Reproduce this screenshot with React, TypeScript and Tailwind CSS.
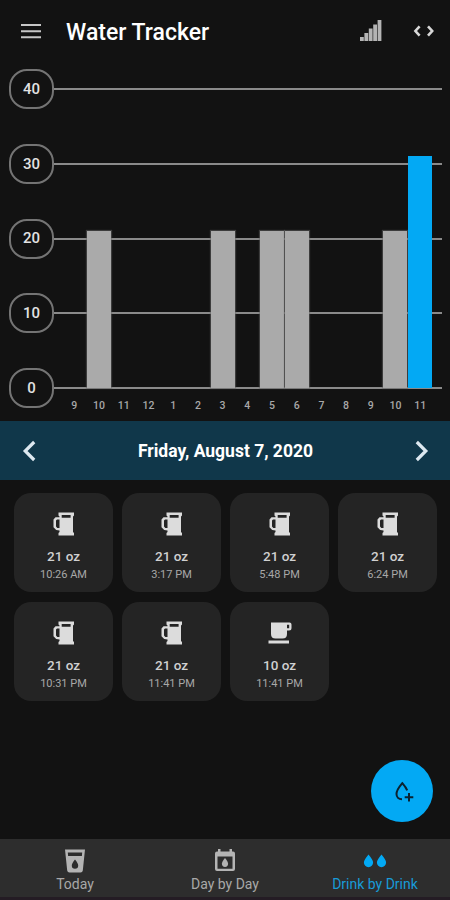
import React from 'react';

interface Drink {
  amount: number;
  time: string;
  kind: 'mug' | 'cup';
}

interface HourTotal {
  hour: string;
  ounces: number;
  active?: boolean;
}

const PIXELS_PER_OUNCE = 7.475;

const ticks = [40, 30, 20, 10, 0];

const hours: HourTotal[] = [
  { hour: '9', ounces: 0 },
  { hour: '10', ounces: 21 },
  { hour: '11', ounces: 0 },
  { hour: '12', ounces: 0 },
  { hour: '1', ounces: 0 },
  { hour: '2', ounces: 0 },
  { hour: '3', ounces: 21 },
  { hour: '4', ounces: 0 },
  { hour: '5', ounces: 21 },
  { hour: '6', ounces: 21 },
  { hour: '7', ounces: 0 },
  { hour: '8', ounces: 0 },
  { hour: '9', ounces: 0 },
  { hour: '10', ounces: 21 },
  { hour: '11', ounces: 31, active: true },
];

const drinks: Drink[] = [
  { amount: 21, time: '10:26 AM', kind: 'mug' },
  { amount: 21, time: '3:17 PM', kind: 'mug' },
  { amount: 21, time: '5:48 PM', kind: 'mug' },
  { amount: 21, time: '6:24 PM', kind: 'mug' },
  { amount: 21, time: '10:31 PM', kind: 'mug' },
  { amount: 21, time: '11:41 PM', kind: 'mug' },
  { amount: 10, time: '11:41 PM', kind: 'cup' },
];

const MugIcon = () => (
  <svg width="22" height="24" viewBox="0 0 22 24" fill="#dcdcdc">
    <path
      fillRule="evenodd"
      d="M5.5 0.5H21V3.5L20 4.5V20L21 21V23.5H5.5V21L6.5 20V18.5L3.2 18L0.5 15.2V7.5L2.5 5.3H6.5V4.5L5.5 3.5ZM8.7 3V5.8H17.6V3ZM6.5 7.5H4L3 8.5V14.5L4.3 16H6.5Z"
    />
  </svg>
);

const CupIcon = () => (
  <svg width="24" height="24" viewBox="0 0 24 24" fill="#dcdcdc">
    <path
      fillRule="evenodd"
      d="M3 1.5H21.5Q23.5 1.5 23.5 3.5V7Q23.5 9.5 21 9.5H19V13Q19 17.5 14.5 17.5H7.5Q3 17.5 3 13ZM19 3.8V7.3H21.2V3.8Z"
    />
    <path d="M0.5 19.5H21V22.5H0.5Z" />
  </svg>
);

const Header = () => (
  <header className="flex h-[69px] items-start pl-[21px] pr-[15px] pt-[19px]">
    <svg width="20" height="24" viewBox="0 0 20 24" fill="#c6c6c6">
      <path d="M0 5H20V7H0ZM0 11.2H20V13.2H0ZM0 17.2H20V19.2H0Z" />
    </svg>
    <h1 className="ml-[25px] text-[23px] font-medium leading-7 text-white">Water Tracker</h1>
    <svg className="ml-auto" width="22" height="24" viewBox="0 0 22 24" fill="#b4b4b4">
      <path d="M0 18H3.8V22H0ZM4.4 14H8.2V22H4.4ZM8.8 9.5H12.6V22H8.8ZM13.2 5.5H17V22H13.2ZM17.6 1H21.4V22H17.6Z" />
    </svg>
    <svg className="ml-[31px]" width="22" height="24" viewBox="0 0 22 24" fill="none" stroke="#d8d8d8" strokeWidth="2.6">
      <path d="M6.6 7.3L2.4 12L6.6 16.7M15 7.3L19.2 12L15 16.7" />
    </svg>
  </header>
);

const Chart = () => (
  <section className="grid h-[352px] pl-[9px] pr-2">
    <div className="col-start-1 row-start-1 flex h-[339px] flex-col justify-between">
      {ticks.map((tick) => (
        <div key={tick} className="flex h-10 items-center">
          <div className="flex h-10 w-[45px] items-center justify-center rounded-[18px] border-2 border-[#747474] text-[15px] font-medium text-[#e2e2e2]">
            {tick}
          </div>
          <div className="h-[2px] flex-1 bg-[#8a8a8a]" />
        </div>
      ))}
    </div>
    <div className="z-10 col-start-1 row-start-1 ml-[53px] mr-[9.5px] flex items-end">
      {hours.map(({ hour, ounces, active }, index) => (
        <div key={index} className="flex flex-1 flex-col">
          {ounces > 0 && (
            <div
              className={`mx-auto w-6 ${active ? 'bg-[#03a9f4]' : 'bg-[#aaaaaa] shadow-[0_0_1px_1px_#66666680]'}`}
              style={{ height: ounces * PIXELS_PER_OUNCE }}
            />
          )}
          <div className="h-[33px] pt-[10px] text-center text-[10.5px] font-medium leading-4 text-[#a8a8a8]">
            {hour}
          </div>
        </div>
      ))}
    </div>
  </section>
);

const DateBar = () => (
  <div className="flex h-[59px] items-center justify-between bg-[#10374a] pl-[21px] pr-5 pt-px">
    <svg width="16" height="22" viewBox="0 0 16 22" fill="none" stroke="#dde8f0" strokeWidth="3.2">
      <path d="M13.2 2L4.2 11L13.2 20" />
    </svg>
    <h2 className="text-[17.5px] font-bold text-white">Friday, August 7, 2020</h2>
    <svg width="16" height="22" viewBox="0 0 16 22" fill="none" stroke="#dde8f0" strokeWidth="3.2">
      <path d="M2.8 2L11.8 11L2.8 20" />
    </svg>
  </div>
);

const DrinkCard: React.FC<{ drink: Drink }> = ({ drink }) => (
  <div className="flex h-[99px] flex-col items-center rounded-[17px] bg-[#242424] pt-[19px]">
    {drink.kind === 'mug' ? <MugIcon /> : <CupIcon />}
    <div className="mt-3 text-[13.5px] font-medium leading-4 text-[#d0d0d0]">{drink.amount} oz</div>
    <div className="mt-1 text-[11px] leading-[14px] text-[#a8a8a8]">{drink.time}</div>
  </div>
);

const BottomNav = () => (
  <nav className="grid h-[61px] grid-cols-3 border-b-[3px] border-[#241c24] bg-[#2d2d2d] text-[14px] text-[#a8a8a8]">
    <div className="flex flex-col items-center pt-[10px]">
      <svg width="24" height="24" viewBox="0 0 24 24" fill="#b4b4b4">
        <path
          fillRule="evenodd"
          d="M2 0.5H22L19.8 21.5Q19.5 23.5 17.5 23.5H6.5Q4.5 23.5 4.2 21.5ZM4.8 3.5L5.1 7H18.9L19.2 3.5ZM12 10.5Q8.8 14.3 8.8 16.5A3.2 3.2 0 0 0 15.2 16.5Q15.2 14.3 12 10.5Z"
        />
      </svg>
      <span className="mt-px leading-5">Today</span>
    </div>
    <div className="flex flex-col items-center pt-[10px]">
      <svg width="24" height="24" viewBox="0 0 24 24" fill="#b4b4b4">
        <path
          fillRule="evenodd"
          d="M5 0H7.5V2.5H16.5V0H19V2.5H20Q22 2.5 22 4.5V20Q22 22 20 22H4Q2 22 2 20V4.5Q2 2.5 4 2.5H5ZM4.5 7.5V19.7H19.5V7.5Z"
        />
        <path d="M12 9Q8.9 12.8 8.9 14.8A3.1 3.1 0 0 0 15.1 14.8Q15.1 12.8 12 9Z" />
      </svg>
      <span className="mt-px leading-5">Day by Day</span>
    </div>
    <div className="flex flex-col items-center pt-[10px] text-[#189bd8]">
      <svg width="24" height="24" viewBox="0 0 24 24" fill="#03a9f4">
        <path d="M5.5 5.5Q0.9 11 0.9 13.6A4.6 4.6 0 0 0 10.1 13.6Q10.1 11 5.5 5.5ZM18.5 5.5Q13.9 11 13.9 13.6A4.6 4.6 0 0 0 23.1 13.6Q23.1 11 18.5 5.5Z" />
      </svg>
      <span className="mt-px leading-5">Drink by Drink</span>
    </div>
  </nav>
);

export default function App() {
  return (
    <div className="flex h-[900px] w-[450px] flex-col bg-[#121212] font-[Roboto,sans-serif]">
      <Header />
      <Chart />
      <DateBar />
      <main className="flex flex-1 flex-col justify-between">
        <div className="grid grid-cols-4 gap-x-[9px] gap-y-[10px] pl-[14px] pr-[13px] pt-[13px]">
          {drinks.map((drink, index) => (
            <DrinkCard key={index} drink={drink} />
          ))}
        </div>
        <button className="mb-[17px] mr-[17px] flex size-[62px] items-center justify-center self-end rounded-full bg-[#03a9f4]">
          <svg width="24" height="24" viewBox="0 0 24 24" fill="none" stroke="#0b2230" strokeWidth="2">
            <path d="M12 20.3C8.6 20.3 6.5 18 6.5 15C6.5 11.5 9.5 7.5 12.3 4.2C14.4 6.6 16.2 9 17.2 11.4M19 14V22.5M14.7 18.2H23.3" />
          </svg>
        </button>
      </main>
      <BottomNav />
    </div>
  );
}
